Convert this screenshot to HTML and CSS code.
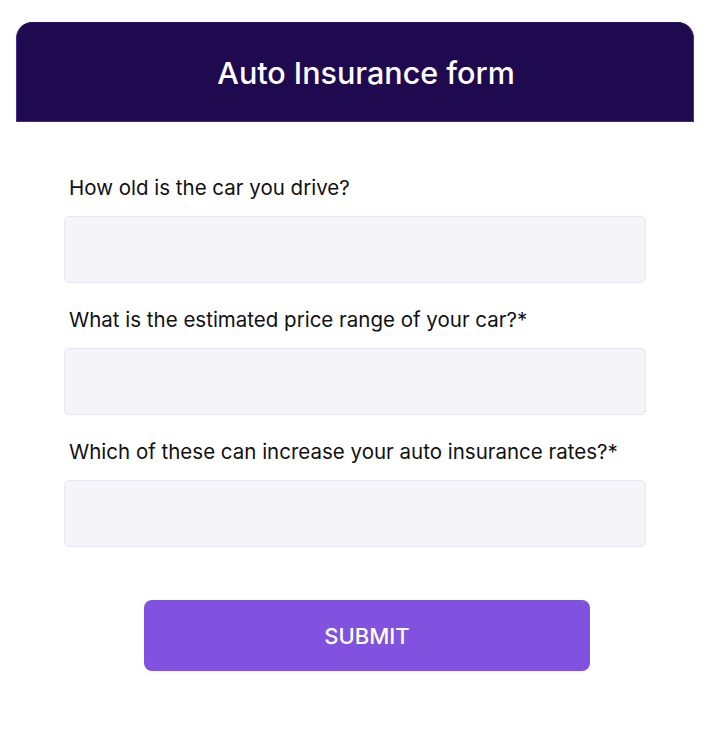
FILE: index.html
```html
<!DOCTYPE html>
<html lang="en">
<head>
    <meta charset="UTF-8">
    <meta name="viewport" content="width=device-width, initial-scale=1.0">
    <title>Auto Insurance form</title>
    <link rel="stylesheet" href="styles.css">
</head>
<body>
    <div class="container">
        <div class="header">
            <h1>Auto Insurance form</h1>
        </div>

        <form class="insurance-form">
            <div class="field">
                <label class="field-label">How old is the car you drive?</label>
                <input type="text" class="field-input">
            </div>
            <div class="field">
                <label class="field-label">What is the estimated price range of your car?*</label>
                <input type="text" class="field-input">
            </div>
            <div class="field">
                <label class="field-label">Which of these can increase your auto insurance rates?*</label>
                <input type="text" class="field-input">
            </div>
            <div class="actions">
                <button type="button" class="submit-btn">SUBMIT</button>
            </div>
        </form>
    </div>
</body>
</html>
```

FILE: styles.css
```css
* {
    margin: 0;
    padding: 0;
    box-sizing: border-box;
    font-family: Inter, "Liberation Sans", sans-serif;
}

body {
    background: white;
    padding: 22px 16px 0;
}

.container {
    width: 678px;
}

.header {
    background: #1f0a4f;
    height: 100px;
    padding-left: 22px;
    border: 1px solid #4a2a8c;
    border-top-color: #2a1260;
    border-radius: 16px 16px 0 0;
    display: flex;
    align-items: center;
    justify-content: center;
}

.header h1 {
    color: white;
    font-size: 30.5px;
    font-weight: 500;
}

.insurance-form {
    padding: 54px 48px 0;
}

.field {
    margin-bottom: 25px;
}

.field-label {
    display: block;
    padding-left: 5px;
    font-size: 20.5px;
    line-height: 24px;
    color: #111;
    margin-bottom: 16px;
}

.field-input {
    display: block;
    width: 100%;
    height: 67px;
    background: #f4f4f9;
    border: 1px solid #e6e6f3;
    border-radius: 5px;
    font-size: 1rem;
    padding: 0 15px;
}

.field-input:focus {
    outline: none;
    border-color: #8052df;
}

.actions {
    display: flex;
    justify-content: center;
    padding: 28px 0 0 24px;
}

.submit-btn {
    width: 446px;
    height: 71px;
    background: #8052df;
    color: white;
    border: none;
    border-radius: 8px;
    font-size: 22px;
    font-weight: 500;
    cursor: pointer;
}
```
